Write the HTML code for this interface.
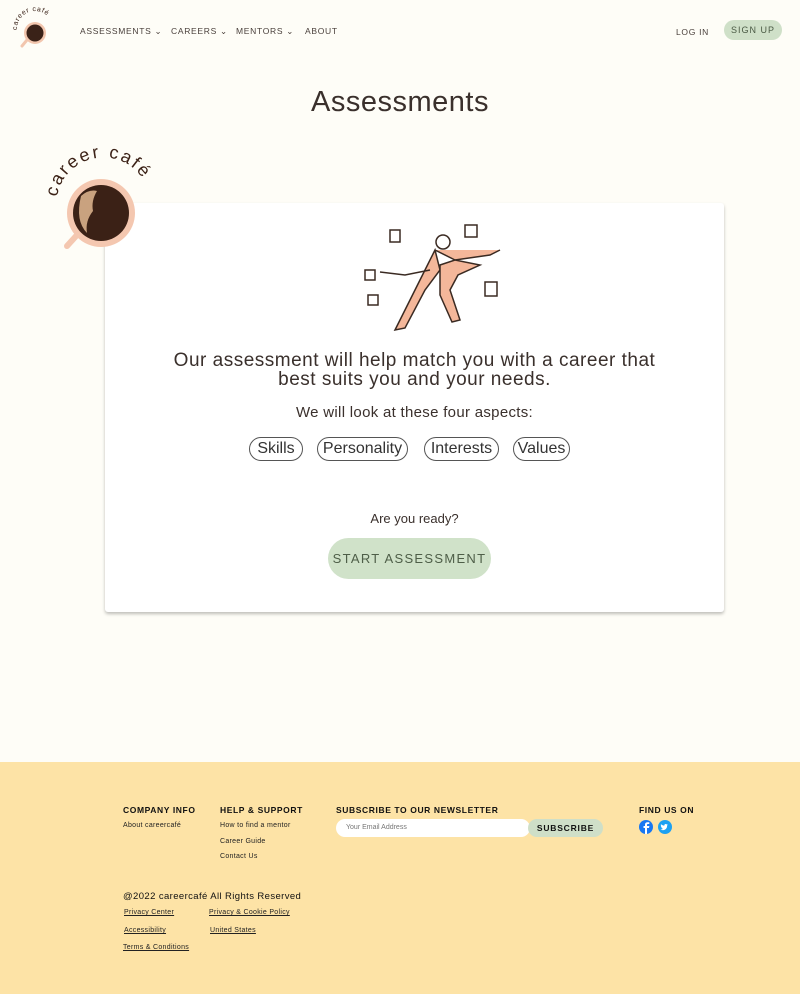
<!DOCTYPE html>
<html><head><meta charset="utf-8"><style>
*{margin:0;padding:0;box-sizing:border-box}
body{width:800px;height:994px;background:#fefdf7;font-family:"Liberation Sans",sans-serif;color:#3a302c;position:relative;overflow:hidden}
.a{position:absolute;white-space:nowrap}
svg{overflow:visible}
.nav{font-size:8.5px;letter-spacing:.7px;color:#4a403c;top:26px}
.card{left:105px;top:203px;width:619px;height:409px;background:#fff;box-shadow:0 2px 3px rgba(0,0,0,.25);border-radius:3px}
.pill{position:absolute;top:437px;height:24px;border:1px solid #555;border-radius:12px;font-size:16px;line-height:22px;text-align:center;color:#333}
.foot{left:0;top:762px;width:800px;height:232px;background:#fde3a6}
.h{font-size:8.5px;font-weight:bold;letter-spacing:.6px;color:#111}
.s{font-size:7px;color:#222;letter-spacing:.3px}
.u{text-decoration:underline}
</style></head><body>
<svg class="a" style="left:12px;top:8px" width="46" height="42" viewBox="0 0 46 42">
<circle cx="23" cy="25" r="11" fill="#f2c6ae"/><circle cx="23" cy="25" r="8.5" fill="#3a2218"/>
<line x1="15" y1="32" x2="10" y2="38" stroke="#f2c6ae" stroke-width="3" stroke-linecap="round"/>
<path id="a1" d="M5 22 A18 18 0 0 1 41 20" fill="none"/>
<text font-size="7" fill="#3a2218"><textPath href="#a1" textLength="42">career café</textPath></text></svg>
<div class="a nav" style="left:80px">ASSESSMENTS ⌄</div>
<div class="a nav" style="left:171px">CAREERS ⌄</div>
<div class="a nav" style="left:236px">MENTORS ⌄</div>
<div class="a nav" style="left:305px">ABOUT</div>
<div class="a nav" style="left:676px;top:27px">LOG IN</div>
<div class="a" style="left:724px;top:20px;width:58px;height:20px;background:#cfe0c8;border-radius:10px;font-size:9px;letter-spacing:1px;text-align:center;line-height:20px;color:#4a5a44">SIGN UP</div>
<div class="a" style="left:0;width:800px;top:86px;text-align:center;font-size:29px;letter-spacing:.5px;color:#3a302c">Assessments</div>
<div class="a card"></div>
<svg class="a" style="left:45px;top:155px" width="120" height="100" viewBox="0 0 120 100">
<circle cx="56" cy="58" r="34" fill="#f4c7b0"/><circle cx="56" cy="58" r="28" fill="#3b2116"/>
<path d="M36 41 Q44 34 52 36 Q46 46 48 56 Q40 66 42 78 Q30 66 36 41Z" fill="#c9a27f"/>
<line x1="32" y1="80" x2="22" y2="91" stroke="#f4c7b0" stroke-width="6" stroke-linecap="round"/>
<path id="arc" d="M12 42 A47 47 0 0 1 104 38" fill="none"/>
<text font-size="18" fill="#3b2116"><textPath href="#arc" textLength="112">career café</textPath></text></svg>
<svg class="a" style="left:360px;top:220px" width="150" height="115" viewBox="0 0 150 115" fill="none" stroke="#3a2a22" stroke-width="1.5">
<path d="M75 30 L95 40 L130 35 L140 30 M75 30 L60 60 L35 110 L45 108 L65 70 L80 50 Z" fill="#f4b79a"/>
<path d="M80 45 L95 40 L120 45 L98 55 L90 70 L100 100 L92 102 L80 75 Z" fill="#f4b79a"/>
<circle cx="83" cy="22" r="7" fill="#fff"/><path d="M70 50 L45 55 L20 52"/>
<rect x="30" y="10" width="10" height="12"/><rect x="105" y="5" width="12" height="12"/><rect x="5" y="50" width="10" height="10"/><rect x="8" y="75" width="10" height="10"/><rect x="125" y="62" width="12" height="14"/>
</svg>
<div class="a" style="left:105px;width:619px;top:351px;text-align:center;font-size:19px;letter-spacing:.5px;line-height:19px;color:#3a302c">Our assessment will help match you with a career that<br>best suits you and your needs.</div>
<div class="a" style="left:105px;width:619px;top:404px;text-align:center;font-size:15px;letter-spacing:.3px">We will look at these four aspects:</div>
<div class="pill" style="left:249px;width:54px">Skills</div>
<div class="pill" style="left:317px;width:91px">Personality</div>
<div class="pill" style="left:424px;width:75px">Interests</div>
<div class="pill" style="left:513px;width:57px">Values</div>
<div class="a" style="left:105px;width:619px;top:511px;text-align:center;font-size:13px">Are you ready?</div>
<div class="a" style="left:328px;top:538px;width:163px;height:41px;border-radius:21px;background:#d0e2c9;text-align:center;line-height:41px;font-size:13px;letter-spacing:1.3px;color:#4e5e48">START ASSESSMENT</div>
<div class="a foot"></div>
<div class="a h" style="left:123px;top:805px">COMPANY INFO</div>
<div class="a s" style="left:123px;top:822px">About careercafé</div>
<div class="a h" style="left:220px;top:805px">HELP &amp; SUPPORT</div>
<div class="a s" style="left:220px;top:822px">How to find a mentor</div>
<div class="a s" style="left:220px;top:838px">Career Guide</div>
<div class="a s" style="left:220px;top:853px">Contact Us</div>
<div class="a h" style="left:336px;top:805px">SUBSCRIBE TO OUR NEWSLETTER</div>
<div class="a" style="left:336px;top:819px;width:194px;height:18px;background:#fff;border-radius:9px;font-size:7px;color:#777;padding-left:10px;line-height:18px">Your Email Address</div>
<div class="a" style="left:528px;top:819px;width:75px;height:18px;background:#cfdfc8;border-radius:9px;font-size:8.5px;font-weight:bold;letter-spacing:.8px;text-align:center;line-height:18px;color:#111">SUBSCRIBE</div>
<div class="a h" style="left:639px;top:805px">FIND US ON</div>
<svg class="a" style="left:639px;top:820px" width="34" height="14" viewBox="0 0 34 14">
<circle cx="7" cy="7" r="7" fill="#1877f2"/><path d="M8 14V8h2l.4-2H8V5c0-.7.3-1 1-1h1.3V2.2H8.6C7 2.2 6 3 6 4.8V6H4.5v2H6v6z" fill="#fff"/>
<circle cx="26" cy="7" r="7" fill="#1da1f2"/><path d="M21.5 9.5c2 1.3 5.5.8 6.5-2.5l.1-1.5.8-.8-.9.2.6-.8-.9.3c-.8-.9-2.5-.4-2.4 1.200-1.3 0-2.600-.7-3.300-1.500-.5 1 0 1.900.5 2.200h-.6c0 .9.7 1.400 1.300 1.500h-.6c.3.7.9 1 1.500 1-.7.6-1.600.8-2.600.7z" fill="#fff"/></svg>
<div class="a" style="left:123px;top:891px;font-size:9.5px;letter-spacing:.4px;color:#111">@2022 careercafé All Rights Reserved</div>
<div class="a s u" style="left:124px;top:909px">Privacy Center</div>
<div class="a s u" style="left:209px;top:909px">Privacy &amp; Cookie Policy</div>
<div class="a s u" style="left:124px;top:927px">Accessibility</div>
<div class="a s u" style="left:210px;top:927px">United States</div>
<div class="a s u" style="left:123px;top:944px">Terms &amp; Conditions</div>
</body></html>
